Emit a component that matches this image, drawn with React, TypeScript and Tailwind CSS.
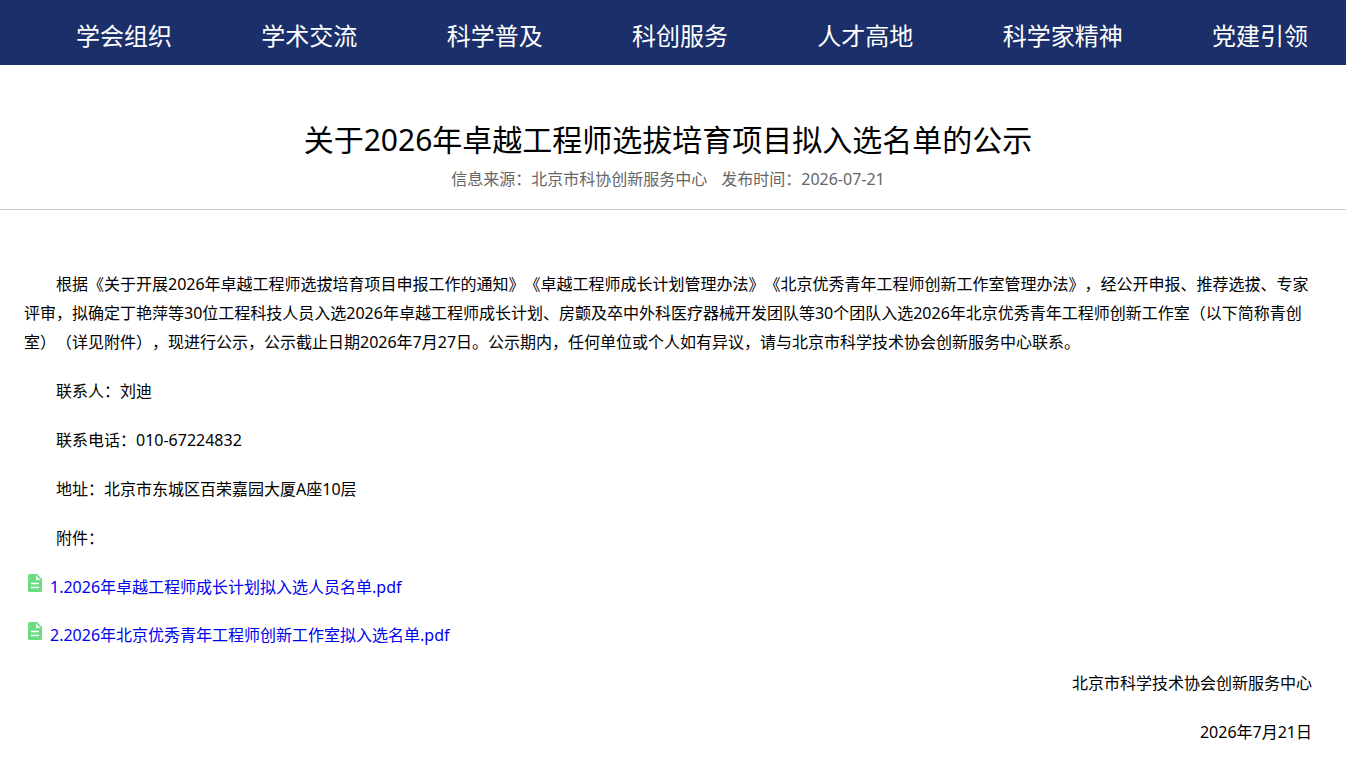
interface NavItem {
  label: string;
  href: string;
}

const navItems: NavItem[] = [
  { label: "学会组织", href: "#organization" },
  { label: "学术交流", href: "#academic" },
  { label: "科学普及", href: "#popularization" },
  { label: "科创服务", href: "#service" },
  { label: "人才高地", href: "#talent" },
  { label: "科学家精神", href: "#spirit" },
  { label: "党建引领", href: "#party" },
];

const contactLines = [
  "联系人：刘迪",
  "联系电话：010-67224832",
  "地址：北京市东城区百荣嘉园大厦A座10层",
  "附件：",
];

const attachments = [
  "1.2026年卓越工程师成长计划拟入选人员名单.pdf",
  "2.2026年北京优秀青年工程师创新工作室拟入选名单.pdf",
];

function FileIcon() {
  return (
    <svg className="mr-1.5 h-5 w-5 shrink-0" viewBox="0 0 20 20" aria-hidden="true">
      <path d="M5.5 1H13l5 5v11.5a1.5 1.5 0 0 1-1.5 1.5h-11A1.5 1.5 0 0 1 4 17.5v-15A1.5 1.5 0 0 1 5.500 1Z" fill="#69de80" />
      <path d="M12 2.500v4.500h4.500Z" fill="#fff" />
      <path d="M7 10.500h8M7 14.500h8" stroke="#fff" strokeWidth="1.300" />
    </svg>
  );
}

function NavBar() {
  return (
    <nav className="bg-[#1b306b] pr-[38px] pl-19 text-2xl text-white">
      <ul className="flex justify-between pt-5 pb-[13px] leading-8">
        {navItems.map((item) => (
          <li key={item.label}>
            <a href={item.href}>{item.label}</a>
          </li>
        ))}
      </ul>
    </nav>
  );
}

export default function App() {
  return (
    <div
      lang="zh-CN"
      className="bg-white font-['Noto_Sans','Noto_Sans_CJK_SC',sans-serif] text-base text-black [text-spacing-trim:space-all]"
    >
      <NavBar />

      <main>
        <header className="border-b border-[#ccc] pt-[50px] pr-2.5 pb-4 text-center">
          <h1 className="text-[30px] leading-[50px]">关于2026年卓越工程师选拔培育项目拟入选名单的公示</h1>
          <p className="flex justify-center gap-3.5 leading-7 text-[#666]">
            <span>信息来源：北京市科协创新服务中心</span>
            <span>发布时间：2026-07-21</span>
          </p>
        </header>

        <article className="flex flex-col gap-5 pt-15 pr-[34px] pl-6 leading-[29px]">
          <p className="indent-8">
            根据《关于开展2026年卓越工程师选拔培育项目申报工作的通知》《卓越工程师成长计划管理办法》《北京优秀青年工程师创新工作室管理办法》，经公开申报、推荐选拔、专家评审，拟确定丁艳萍等30位工程科技人员入选2026年卓越工程师成长计划、房颤及卒中外科医疗器械开发团队等30个团队入选2026年北京优秀青年工程师创新工作室（以下简称青创室）（详见附件），现进行公示，公示截止日期2026年7月27日。公示期内，任何单位或个人如有异议，请与北京市科学技术协会创新服务中心联系。
          </p>

          {contactLines.map((line) => (
            <p key={line} className="indent-8">
              {line}
            </p>
          ))}

          {/* Attachments */}
          <ul className="flex flex-col gap-5 leading-7">
            {attachments.map((name) => (
              <li key={name} className="flex items-start">
                <FileIcon />
                <a href="#download" className="text-[#0000ee]">
                  {name}
                </a>
              </li>
            ))}
          </ul>

          <p className="text-right">北京市科学技术协会创新服务中心</p>
          <p className="text-right">2026年7月21日</p>
        </article>
      </main>
    </div>
  );
}
